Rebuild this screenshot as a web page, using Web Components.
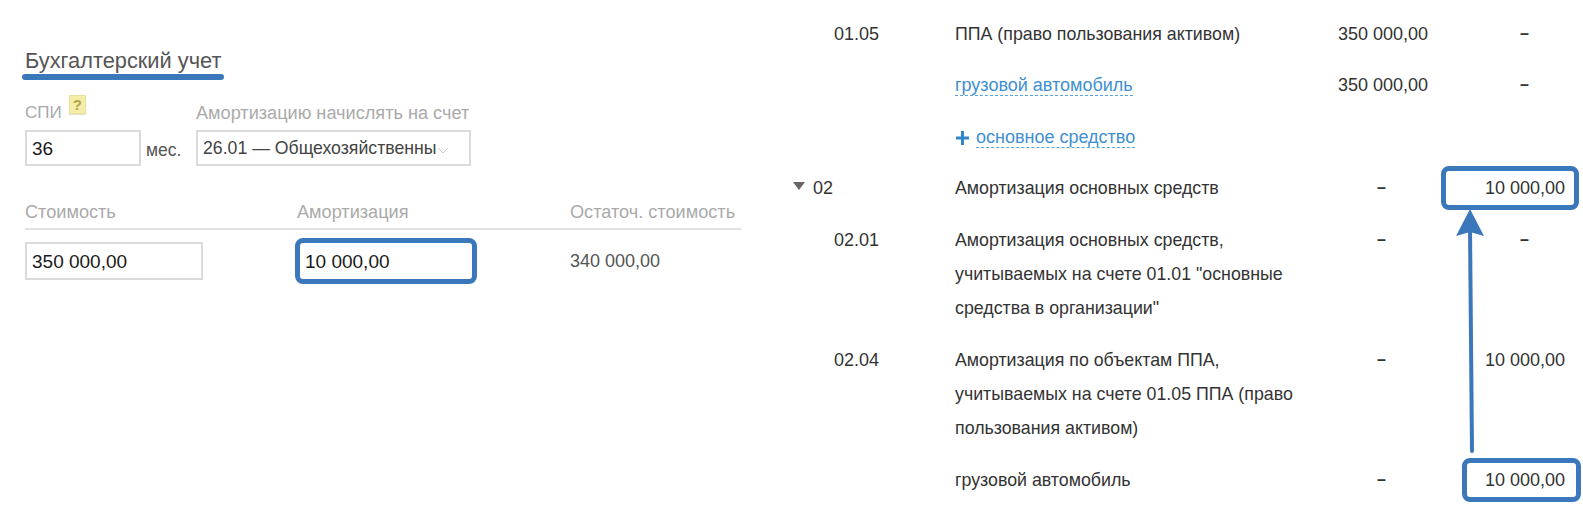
<!DOCTYPE html>
<html lang="ru">
<head>
<meta charset="utf-8">
<title>Бухгалтерский учет</title>
<style>
  html, body { margin: 0; background: #fff; }
  body { font-family: "Liberation Sans", Arial, sans-serif; color: #333; }
</style>
</head>
<body>
<acc-page>
  <acc-form slot="left"></acc-form>
  <acc-ledger slot="right">
    <acc-row code="01.05" a="350 000,00" b="–">ППА (право пользования активом)</acc-row>
    <acc-row a="350 000,00" b="–"><acc-link>грузовой автомобиль</acc-link></acc-row>
    <acc-row><acc-link plus>основное средство</acc-link></acc-row>
    <acc-row code="02" open a="–" b="10 000,00" mark="wide">Амортизация основных средств</acc-row>
    <acc-row code="02.01" a="–" b="–">Амортизация основных средств,<br>учитываемых на счете 01.01 "основные<br>средства в организации"</acc-row>
    <acc-row code="02.04" a="–" b="10 000,00">Амортизация по объектам ППА,<br>учитываемых на счете 01.05 ППА (право<br>пользования активом)</acc-row>
    <acc-row a="–" b="10 000,00" mark="narrow">грузовой автомобиль</acc-row>
  </acc-ledger>
</acc-page>

<script>
class AccPage extends HTMLElement {
  constructor() {
    super();
    this.attachShadow({ mode: 'open' }).innerHTML = `
      <style>
        :host { display: flex; width: 1583px; height: 505px; overflow: hidden; }
        .left { flex: 0 0 785px; }
        .right { flex: 1; position: relative; }
        svg { position: absolute; left: 670px; top: 208px; }
      </style>
      <div class="left"><slot name="left"></slot></div>
      <div class="right">
        <slot name="right"></slot>
        <svg width="30" height="246" viewBox="0 0 30 246">
          <path d="M15 20 L17 243" stroke="#3b78bb" stroke-width="4" stroke-linecap="round" fill="none"/>
          <path d="M15 1 L1 28 L15 24 L29 28 Z" fill="#3b78bb"/>
        </svg>
      </div>`;
  }
}

class AccForm extends HTMLElement {
  constructor() {
    super();
    this.attachShadow({ mode: 'open' }).innerHTML = `
      <style>
        :host { display: block; padding: 47px 0 0 25px; font-size: 18px; }
        h2 { display: inline-block; position: relative; margin: 0; font-weight: 400; font-size: 21.8px; line-height: 27px; color: #555; vertical-align: top; }
        h2::after { content: ""; position: absolute; left: -3px; right: -3px; bottom: -6px; height: 6px; border-radius: 3px; background: #3b78bb; }
        .top { display: flex; margin-top: 21px; height: 71px; }
        .spi { width: 171px; }
        .label { color: #aaa; height: 35px; line-height: 36px; white-space: nowrap; font-size: 18.15px; }
        .spi .label { font-size: 17px; }
        .help { display: inline-block; box-sizing: border-box; width: 17px; height: 19px; margin-left: 7px; position: relative; top: -9px; vertical-align: middle;
                background: #f6eea8; border: 1px solid #e9e0a0; box-shadow: 0 1px 1px #e5e5d5; font: 700 15px/17px "Liberation Sans", sans-serif; color: #b0a348; text-align: center; }
        .row { display: flex; align-items: center; }
        .input { box-sizing: border-box; border: 2px solid #dadada; font-size: 19px; color: #1a1a1a; padding: 0 5px; white-space: nowrap; }
        .unit { color: #555; margin-left: 5px; padding-top: 5px; font-size: 17.5px; }
        .select { box-sizing: border-box; width: 275px; height: 36px; border: 2px solid #dadada; padding-left: 5px; line-height: 33px; color: #444; font-size: 17.7px; display: flex; white-space: nowrap; overflow: hidden; }
        .select svg { flex: none; margin: 15px 0 0 0; }
        .heads { display: flex; margin-top: 34px; width: 716px; border-bottom: 2px solid #e2e2e2; color: #aaa; height: 28px; line-height: 24px; font-size: 18.15px; }
        .c1 { width: 272px; flex: none; }
        .c2 { width: 273px; flex: none; }
        .vals { display: flex; margin-top: 12px; align-items: center; width: 716px; }
        .rest { color: #555; }
        .mark { position: relative; border-color: transparent; padding-left: 6px; }
        .mark::after { content: ""; position: absolute; left: -4px; right: -4px; top: -6px; bottom: -6px; border: 5px solid #3b78bb; border-radius: 8px; }
      </style>
      <h2>Бухгалтерский учет</h2>
      <div class="top">
        <div class="spi">
          <div class="label">СПИ<span class="help">?</span></div>
          <div class="row"><div class="input" style="width:116px;height:36px;line-height:34px">36</div><div class="unit">мес.</div></div>
        </div>
        <div>
          <div class="label">Амортизацию начислять на счет</div>
          <div class="select"><span>26.01 — Общехозяйственны</span><svg width="12" height="8" viewBox="0 0 12 8"><path d="M1 1 L6 6 L11 1" fill="none" stroke="#ccc" stroke-width="1"/></svg></div>
        </div>
      </div>
      <div class="heads"><div class="c1">Стоимость</div><div class="c2">Амортизация</div><div>Остаточ. стоимость</div></div>
      <div class="vals">
        <div class="c1"><div class="input" style="width:178px;height:38px;line-height:35px">350 000,00</div></div>
        <div class="c2"><div class="input mark" style="width:178px;height:38px;line-height:35px">10 000,00</div></div>
        <div class="rest">340 000,00</div>
      </div>`;
  }
}

class AccLedger extends HTMLElement {
  constructor() {
    super();
    this.attachShadow({ mode: 'open' }).innerHTML = `
      <style>
        :host { display: block; padding-top: 8px; font-size: 18px; line-height: 34.3px; color: #333; }
      </style>
      <slot></slot>`;
  }
}

class AccRow extends HTMLElement {
  constructor() {
    super();
    const code = this.getAttribute('code') || '';
    const a = this.getAttribute('a') || '';
    const b = this.getAttribute('b') || '';
    const mark = this.getAttribute('mark') || '';
    const open = this.hasAttribute('open');
    this.attachShadow({ mode: 'open' }).innerHTML = `
      <style>
        :host { display: grid; grid-template-columns: 170px 330px 143px 137px; padding: 8.6px 0; }
        .code { display: flex; padding-left: ${open ? 8 : 49}px; }
        .tri { width: 0; height: 0; border: 6px solid transparent; border-top: 8px solid #666; border-bottom: 0; margin: 11px 8px 0 0; }
        .name { white-space: nowrap; font-size: 17.8px; }
        .num { text-align: right; white-space: nowrap; }
        .a.dash { padding-right: 42px; font-size: 16px; font-weight: 700; }
        .b.dash { padding-right: 36px; font-size: 16px; font-weight: 700; }
        .b { position: relative; }
        .b.wide::after, .b.narrow::after { content: ""; position: absolute; top: -5px; bottom: -5px; border: 5px solid #3b78bb; border-radius: 8px; }
        .b.wide::after { left: 13px; right: -14px; }
        .b.narrow::after { left: 34px; right: -16px; }
      </style>
      <div class="code">${open ? '<div class="tri"></div>' : ''}${code}</div>
      <div class="name"><slot></slot></div>
      <div class="num a ${a === '–' ? 'dash' : ''}">${a}</div>
      <div class="num b ${mark} ${b === '–' ? 'dash' : ''}">${b}</div>`;
  }
}

class AccLink extends HTMLElement {
  constructor() {
    super();
    const plus = this.hasAttribute('plus');
    this.attachShadow({ mode: 'open' }).innerHTML = `
      <style>
        :host { display: inline-block; color: #3d8fd1; font-size: 18px; }
        span { border-bottom: 1px dashed #5aa3dc; }
        svg { margin-right: 6px; vertical-align: -2px; }
      </style>
      ${plus ? '<svg width="15" height="14" viewBox="0 0 15 14"><path d="M7.5 0V14M1 7H14" stroke="#2f86cc" stroke-width="3"/></svg>' : ''}<span><slot></slot></span>`;
  }
}

customElements.define('acc-page', AccPage);
customElements.define('acc-form', AccForm);
customElements.define('acc-ledger', AccLedger);
customElements.define('acc-row', AccRow);
customElements.define('acc-link', AccLink);
</script>
</body>
</html>
